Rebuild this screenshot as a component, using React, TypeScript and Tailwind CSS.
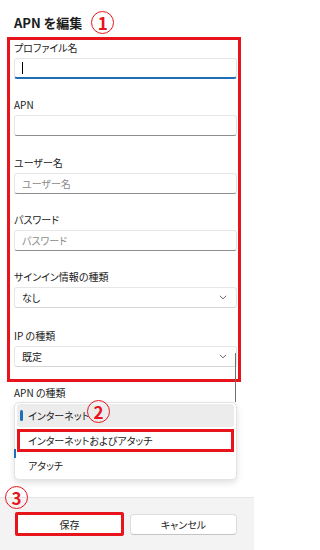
import React from "react";

const RED = "border-[#e8141c]";

function Badge({ n }: { n: string }) {
  return (
    <span className="flex h-[23px] w-[23px] items-center justify-center rounded-full border border-[#e8141c] text-[17px] font-bold leading-none text-[#e8141c]">
      {n}
    </span>
  );
}

function Chevron() {
  return (
    <svg width="8" height="5" viewBox="0 0 8 5" className="text-[#6b6b6b]">
      <path d="M0.8 0.8 L4 3.8 L7.2 0.8" fill="none" stroke="currentColor" strokeWidth="1" />
    </svg>
  );
}

function TextField({
  label,
  placeholder,
  focused,
  gap,
}: {
  label: string;
  placeholder?: string;
  focused?: boolean;
  gap: string;
}) {
  return (
    <div className={gap}>
      <div className="h-[12px] text-[10px] leading-[12px] text-[#1b1b1b]">{label}</div>
      <div
        className={
          "mt-[4px] flex h-[21px] items-center rounded-[3px] border border-[#e6e6e6] bg-white pl-[7px] " +
          (focused ? "border-b-2 border-b-[#1f6fb8]" : "border-b-[#8d8d8d]")
        }
      >
        {focused && <span className="h-[12px] w-px bg-black" />}
        {placeholder && <span className="text-[10px] text-[#8a8a8a]">{placeholder}</span>}
      </div>
    </div>
  );
}

function SelectField({ label, value, gap }: { label: string; value: string; gap: string }) {
  return (
    <div className={gap}>
      <div className="h-[12px] text-[10px] leading-[12px] text-[#1b1b1b]">{label}</div>
      <div className="mt-[4px] flex h-[21px] items-center justify-between rounded-[3px] border border-[#e6e6e6] border-b-[#d6d6d6] bg-white pl-[7px] pr-[9px]">
        <span className="text-[10px] text-[#1b1b1b]">{value}</span>
        <Chevron />
      </div>
    </div>
  );
}

export default function App() {
  return (
    <div className="relative flex h-[550px] w-[254px] flex-col overflow-hidden bg-white font-['Noto_Sans_CJK_JP',sans-serif] [font-feature-settings:'palt']">
      <div className="relative flex-1">
        {/* タイトル */}
        <div className="mt-[11px] flex h-[23px] items-center gap-[9px] pl-[14px]">
          <span className="text-[13px] font-bold leading-[22px] text-[#1b1b1b]">APN を編集</span>
          <Badge n="1" />
        </div>

        {/* 入力欄 (赤枠) */}
        <div className={"ml-[7px] mt-[3px] w-[234px] border-[3px] pb-[12px] pl-[4px] pr-[1px] pt-[2px] " + RED}>
          <TextField label="プロファイル名" focused gap="" />
          <TextField label="APN" gap="mt-[20px]" />
          <TextField label="ユーザー名" placeholder="ユーザー名" gap="mt-[21px]" />
          <TextField label="パスワード" placeholder="パスワード" gap="mt-[20px]" />
          <SelectField label="サインイン情報の種類" value="なし" gap="mt-[20px]" />
          <SelectField label="IP の種類" value="既定" gap="mt-[22px]" />
        </div>

        <div className="ml-[14px] mt-[5px] h-[12px] text-[10px] leading-[12px] text-[#1b1b1b]">APN の種類</div>

        {/* スクロールバー */}
        <div className="absolute left-[235px] top-[353px] h-[49px] w-px bg-[#6f6f6f]" />

        {/* ドロップダウン */}
        <div className="absolute left-[14px] top-[402px] flex h-[78px] w-[223px] flex-col gap-[2px] rounded-[5px] border border-[#e3e3e3] bg-white px-[2px] pt-[1px] shadow-[0_3px_6px_rgba(0,0,0,0.12)]">
          <div className="relative flex h-[23px] items-center rounded-[3px] bg-[#ececec] pl-[11px] text-[10px] text-[#1b1b1b]">
            <span className="absolute left-[3px] top-[6px] h-[11px] w-[3px] rounded-full bg-[#1f6fb8]" />
            インターネット
          </div>
          <div className={"flex h-[23px] items-center border-[3px] pl-[8px] text-[10px] text-[#1b1b1b] " + RED}>
            インターネットおよびアタッチ
          </div>
          <div className="flex h-[23px] items-center pl-[11px] text-[10px] text-[#1b1b1b]">アタッチ</div>
        </div>
        <div className="absolute left-[14px] top-[449px] h-[9px] w-[2px] bg-[#1f6fb8]" />
        <div className="absolute left-[87px] top-[400px]">
          <Badge n="2" />
        </div>
      </div>

      {/* フッター */}
      <div className="flex h-[53px] gap-[6px] border-t border-[#e5e5e5] bg-[#f3f3f3] pl-[15px] pt-[14px]">
        <div className={"flex h-[24px] w-[109px] items-center justify-center rounded-[2px] border-[3px] bg-white text-[10px] text-[#1b1b1b] " + RED}>
          保存
        </div>
        <div className="mt-[2px] flex h-[21px] w-[107px] items-center justify-center rounded-[4px] border border-[#dcdcdc] border-b-[#c4c4c4] bg-white text-[10px] text-[#1b1b1b]">
          キャンセル
        </div>
      </div>
      <div className="absolute left-[5px] top-[486px]">
        <Badge n="3" />
      </div>
    </div>
  );
}
